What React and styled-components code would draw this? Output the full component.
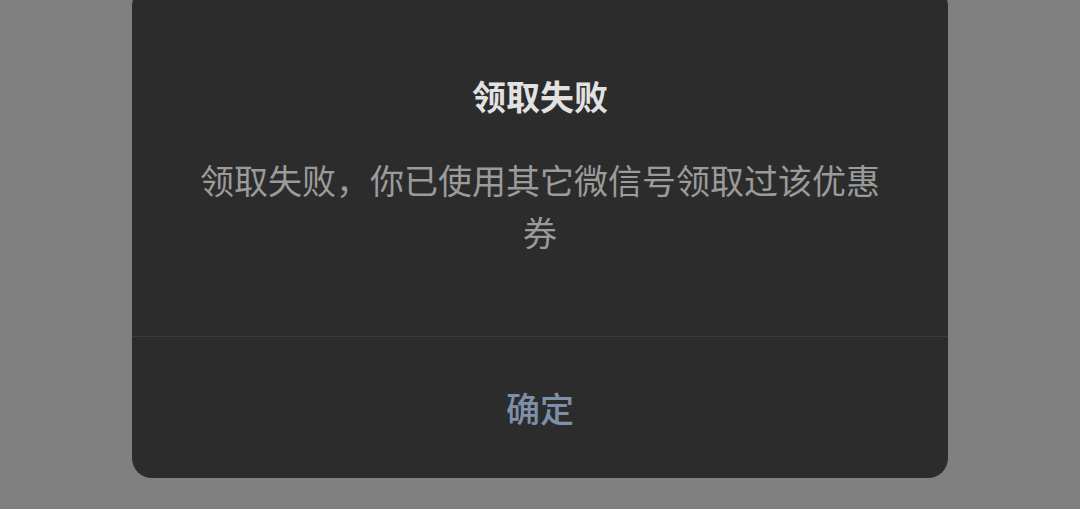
import React from 'react'
import styled, { createGlobalStyle } from 'styled-components'

const Global = createGlobalStyle`
    html, body {
        margin:0;
        padding:0;
        background:#7f807f;
    }
    body {
        font-family:"Noto Sans CJK SC", "Noto Sans", sans-serif;
    }
`

const Overlay = styled('div')`
    width:1080px;
    height:509px;
    overflow:hidden;
    display:flex;
    justify-content:center;
    align-items:flex-start;
    background:#7f807f;
`

const Dialog = styled('div')`
    width:816px;
    margin-top:-14px;
    background:#2c2c2c;
    border-radius:20px;
    display:flex;
    flex-direction:column;
    overflow:hidden;
`

const Content = styled('div')`
    padding:86px 64px 78px 64px;
    display:flex;
    flex-direction:column;
    align-items:center;
    border-bottom:1px solid #3a3a3a;
`

const Title = styled('h3')`
    margin:0;
    font-size:34px;
    line-height:48px;
    font-weight:600;
    color:#e2e2e2;
`

const Message = styled('p')`
    margin:34px 0 0 0;
    font-size:34px;
    line-height:52px;
    color:#9b9b9b;
    text-align:center;
`

const Button = styled('button')`
    height:141px;
    border:none;
    background:transparent;
    font-family:inherit;
    font-size:34px;
    font-weight:500;
    color:#7e90a9;
    cursor:pointer;
`

const App = () => {
    return(
        <>
            <Global />
            <Overlay>
                <Dialog>
                    <Content>
                        <Title>领取失败</Title>
                        <Message>领取失败，你已使用其它微信号领取过该优惠券</Message>
                    </Content>
                    <Button>确定</Button>
                </Dialog>
            </Overlay>
        </>
    )
}
export default App
